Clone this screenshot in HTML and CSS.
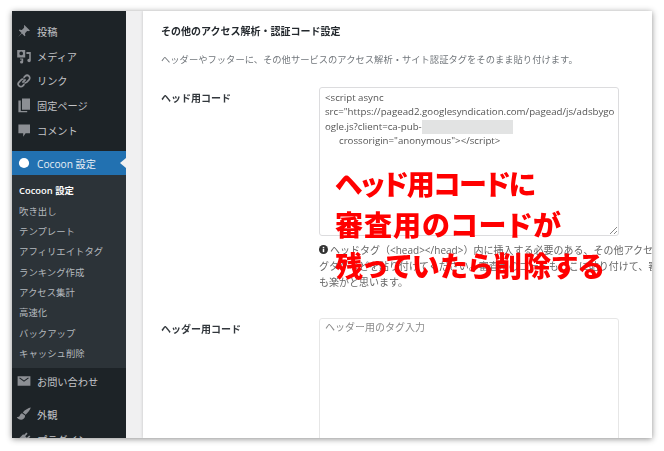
FILE: index.html
```html
<!DOCTYPE html>
<html lang="ja">
<head>
    <meta charset="UTF-8">
    <title>その他のアクセス解析・認証コード設定</title>
    <link rel="stylesheet" href="styles.css">
</head>
<body>
    <div class="window">
        <nav class="sidebar">
            <ul class="menu">
                <li class="menu-item">
                    <svg class="icon" viewBox="0 0 20 20"><path d="M10.400 2.500l7 7-1.300.7c-1-.5-1.900-.4-2.500.1l-2 2.200c-.5.700-.4 1.900.2 3.100l-1 1-3.400-3.600-4.800 4.500 4.300-5-3.400-3.300 1-1c1.300.6 2.400.7 3.100.2l2.200-2c.5-.6.6-1.500.1-2.500z"/></svg>
                    投稿
                </li>
                <li class="menu-item">
                    <svg class="icon" viewBox="0 0 20 20"><path fill-rule="evenodd" d="M1.500 2.500h10v9.500h-10zM6.500 4.500a2.300 2.300 0 1 0 0 4.600 2.300 2.300 0 0 0 0-4.600zM13 5h5.500v10.500a2.200 2.200 0 1 1-2-2.200V7.500H13zM5 13h4v4.500a2 2 0 1 1-2-2v-1H5z"/></svg>
                    メディア
                </li>
                <li class="menu-item">
                    <svg class="icon" viewBox="0 0 20 20"><path fill="none" stroke="currentColor" stroke-width="2.200" d="M8 12l4-4M9.500 6l2-2a3.300 3.300 0 0 1 4.700 4.700L13.500 11.500a3 3 0 0 1-3 .5M10.500 14l-2 2A3.300 3.300 0 0 1 3.800 11.300L6.500 8.500a3 3 0 0 1 3-.5"/></svg>
                    リンク
                </li>
                <li class="menu-item">
                    <svg class="icon" viewBox="0 0 20 20"><path d="M7.500 2H17.500v14H7.500zM3 4.500h3V17.500h8v1.500H3z"/></svg>
                    固定ページ
                </li>
                <li class="menu-item">
                    <svg class="icon" viewBox="0 0 20 20"><path d="M3 3h14.500v11H12l-3 4.500V14H3z"/></svg>
                    コメント
                </li>
            </ul>
            <div class="current">
                <svg class="icon icon-white" viewBox="0 0 20 20"><circle cx="10" cy="10" r="8.500"/></svg>
                Cocoon 設定
            </div>
            <ul class="submenu">
                <li class="submenu-title">Cocoon 設定</li>
                <li>吹き出し</li>
                <li>テンプレート</li>
                <li>アフィリエイトタグ</li>
                <li>ランキング作成</li>
                <li>アクセス集計</li>
                <li>高速化</li>
                <li>バックアップ</li>
                <li>キャッシュ削除</li>
            </ul>
            <div class="menu-item menu-contact">
                <svg class="icon" viewBox="0 0 20 20"><path d="M2 4h16v12H2zM4 6.500l6 4.500 6-4.500-.8-.8L10 9.400 4.800 5.700z" fill-rule="evenodd"/></svg>
                お問い合わせ
            </div>
            <ul class="menu menu-bottom">
                <li class="menu-item">
                    <svg class="icon" viewBox="0 0 20 20"><path d="M18.500 2c-3 .5-7.500 3-10 6l3.500 3c2.800-2.500 5.800-6 6.500-9zM7.500 9c-2 .8-2.500 2.500-3 3.500-.5.800-1.500 1.500-3.500 1.500 1.500 3 6 4 8.500 2 1.500-1.200 2-2.500 1.800-4z"/></svg>
                    外観
                </li>
                <li class="menu-item">
                    <svg class="icon" viewBox="0 0 20 20"><path d="M13 2l1.500 1.500-3 3L13.500 8.500l3-3L18 7l-3 3 1 1-5 5c-2 1.500-4 1.500-5.500.5L3 19l-2-2 2.500-2.500c-1-1.500-1-3.500.5-5.500l5-5 1 1z"/></svg>
                    プラグイン
                </li>
            </ul>
        </nav>

        <main class="panel">
            <h2 class="panel-title">その他のアクセス解析・認証コード設定</h2>
            <p class="panel-desc">ヘッダーやフッターに、その他サービスのアクセス解析・サイト認証タグをそのまま貼り付けます。</p>

            <div class="field-row">
                <div class="field-label">ヘッド用コード</div>
                <div class="field-body">
                    <div class="code-box">
                        <div>&lt;script async</div>
                        <div>src="https://pagead2.googlesyndication.com/pagead/js/adsbygo</div>
                        <div>ogle.js?client=ca-pub-<span class="masked"></span></div>
                        <div class="indent">crossorigin="anonymous"&gt;&lt;/script&gt;</div>
                        <svg class="grip" viewBox="0 0 10 10"><path d="M9 2L2 9M9 6L6 9" fill="none" stroke="#888" stroke-width="1"/></svg>
                    </div>
                    <div class="note">
                        <div><svg class="info" viewBox="0 0 12 12"><circle cx="6" cy="6" r="6"/><rect x="5" y="5" width="2" height="4.500" fill="#fff"/><rect x="5" y="2.500" width="2" height="1.700" fill="#fff"/></svg>ヘッドタグ（&lt;head&gt;&lt;/head&gt;）内に挿入する必要のある、その他アクセス解析</div>
                        <div>グタグなどを貼り付けてください。審査用のコードもここに貼り付けて、審査</div>
                        <div>も楽かと思います。</div>
                    </div>
                </div>
            </div>

            <div class="field-row field-row-second">
                <div class="field-label">ヘッダー用コード</div>
                <div class="field-body">
                    <div class="code-box code-box-empty">ヘッダー用のタグ入力</div>
                </div>
            </div>

            <div class="callout">
                <div class="callout-first">ヘッド用コードに</div>
                <div class="callout-wide">審査用のコードが</div>
                <div class="callout-wide">残っていたら削除する</div>
            </div>
        </main>
    </div>
</body>
</html>
```

FILE: styles.css
```css
* {
    box-sizing: border-box;
    margin: 0;
    padding: 0;
}

html, body {
    height: 100%;
    overflow: hidden;
}

body {
    background: #fff;
    padding: 11px 12px 13px;
    font-family: "Open Sans", "Noto Sans CJK JP", sans-serif;
}

.window {
    display: flex;
    height: 427px;
    overflow: hidden;
    background: #f0f0f1;
    box-shadow: 0 1px 6px rgba(0, 0, 0, 0.45);
    filter: blur(0.3px);
}

/* サイドバー */
.sidebar {
    width: 114px;
    flex-shrink: 0;
    background: #1d2327;
    color: #c3c4c7;
    font-size: 10.200px;
    overflow: hidden;
}

.sidebar ul {
    list-style: none;
}

.menu {
    padding-top: 8px;
}

.menu-item {
    display: flex;
    align-items: center;
    height: 24.700px;
    white-space: nowrap;
}

.icon {
    width: 16px;
    height: 16px;
    margin: 0 5px 0 4px;
    flex-shrink: 0;
    fill: #8c8f94;
    color: #8c8f94;
}

.icon-white {
    fill: #fff;
    width: 12px;
    height: 12px;
    margin: 0 7px 0 6px;
}

.current {
    position: relative;
    display: flex;
    align-items: center;
    height: 24px;
    margin-top: 9px;
    background: #2271b1;
    color: #e8eef4;
    white-space: nowrap;
}

.current::after {
    content: "";
    position: absolute;
    right: 0;
    top: 7px;
    border: 5px solid transparent;
    border-left-width: 0;
    border-right: 6px solid #f0f0f1;
}

.submenu {
    background: #2c3338;
    padding: 6px 0 4px 7px;
    font-size: 9.400px;
    color: #b4b9be;
}

.submenu li {
    height: 20.300px;
    line-height: 20.300px;
    white-space: nowrap;
}

.submenu .submenu-title {
    color: #fff;
    font-weight: 600;
}

.menu-contact {
    height: 24px;
    margin-top: 1px;
}

.menu-bottom {
    padding-top: 9px;
}

/* メインパネル */
.panel {
    position: relative;
    flex: 1;
    margin-left: 17px;
    background: #fff;
    padding: 13px 0 0 18px;
    box-shadow: 0 0 3px rgba(0, 0, 0, 0.2);
    overflow: hidden;
    color: #50575e;
}

.panel-title {
    font-size: 10px;
    font-weight: 700;
    line-height: 14px;
    color: #23282d;
}

.panel-desc {
    margin-top: 15px;
    font-size: 9.300px;
    line-height: 14px;
    color: #72777c;
    white-space: nowrap;
}

.field-row {
    display: flex;
    margin-top: 20px;
}

.field-row-second {
    margin-top: 28px;
}

.field-label {
    width: 158px;
    flex-shrink: 0;
    padding-top: 3px;
    font-size: 10px;
    font-weight: 700;
    line-height: 16px;
    color: #32373c;
}

.field-body {
    width: 300px;
    flex-shrink: 0;
}

.code-box {
    position: relative;
    height: 149px;
    border: 1px solid #dcdcde;
    border-radius: 3px;
    padding: 3px 5px;
    font-size: 9.700px;
    line-height: 14.400px;
    color: #555;
    white-space: nowrap;
    overflow: hidden;
}

.code-box-empty {
    height: 140px;
    border-color: #e6e6e6;
    font-size: 10px;
    color: #8a8a8a;
    line-height: 16px;
    padding-top: 0;
}

.indent {
    padding-left: 14px;
}

.masked {
    display: inline-block;
    width: 91px;
    height: 14px;
    vertical-align: top;
    background: #e2e3e3;
}

.grip {
    position: absolute;
    right: 0;
    bottom: 0;
    width: 10px;
    height: 10px;
}

.note {
    margin-top: 6px;
    font-size: 10px;
    line-height: 16px;
    color: #666;
    white-space: nowrap;
}

.info {
    width: 9px;
    height: 9px;
    margin-right: 2px;
    fill: #333;
}

/* 赤い注釈 */
.callout {
    position: absolute;
    left: 192px;
    top: 152px;
    font-family: "Noto Sans CJK JP", sans-serif;
    font-size: 28px;
    font-weight: 900;
    line-height: 41px;
    color: #f00;
    white-space: nowrap;
    font-feature-settings: "palt";
}

.callout-first {
    letter-spacing: -1.300px;
}

.callout-wide {
    letter-spacing: 1px;
}
```
